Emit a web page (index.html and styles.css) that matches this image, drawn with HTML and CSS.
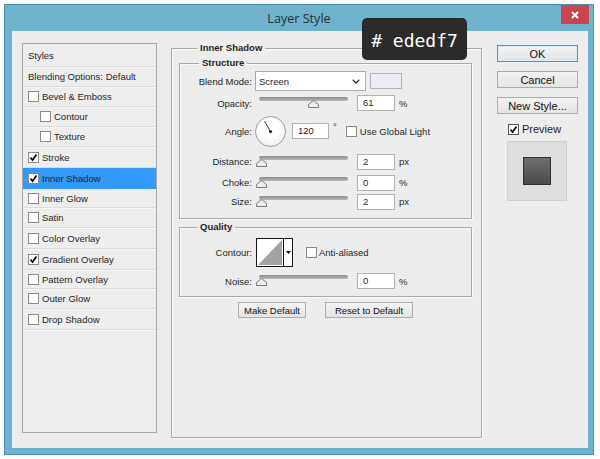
FILE: index.html
```html
<!DOCTYPE html>
<html>
<head>
<meta charset="utf-8">
<link rel="stylesheet" href="styles.css">
</head>
<body>
<div class="window">
  <div class="titlebar">
    <span></span>
    <span class="title">Layer Style</span>
    <div class="close"><svg width="10" height="10" viewBox="0 0 10 10"><path d="M2 2 L8 8 M8 2 L2 8" stroke="#fff" stroke-width="1.8" fill="none"/></svg></div>
  </div>
  <div class="tooltip"># ededf7</div>
  <div class="content">
    <div class="styles-panel">
      <div class="srow head">Styles</div>
      <div class="srow">Blending Options: Default</div>
      <div class="srow"><span class="cb"></span>Bevel &amp; Emboss</div>
      <div class="srow sub"><span class="cb"></span>Contour</div>
      <div class="srow sub"><span class="cb"></span>Texture</div>
      <div class="srow tall"><span class="cb"><svg viewBox="0 0 9 9"><polyline points="1.5,4.5 3.5,7 7.5,1.5"/></svg></span>Stroke</div>
      <div class="srow tall active"><span class="cb"><svg viewBox="0 0 9 9"><polyline points="1.5,4.5 3.5,7 7.5,1.5"/></svg></span>Inner Shadow</div>
      <div class="srow short"><span class="cb"></span>Inner Glow</div>
      <div class="srow"><span class="cb"></span>Satin</div>
      <div class="srow tall"><span class="cb"></span>Color Overlay</div>
      <div class="srow tall"><span class="cb"><svg viewBox="0 0 9 9"><polyline points="1.5,4.5 3.5,7 7.5,1.5"/></svg></span>Gradient Overlay</div>
      <div class="srow short"><span class="cb"></span>Pattern Overlay</div>
      <div class="srow"><span class="cb"></span>Outer Glow</div>
      <div class="srow tall"><span class="cb"></span>Drop Shadow</div>
    </div>

    <div class="group main">
      <div class="gtitle">Inner Shadow</div>
      <div class="group structure">
        <div class="gtitle">Structure</div>
        <div class="frow blend">
          <span class="lbl">Blend Mode:</span>
          <div class="select"><span>Screen</span><svg width="8" height="5" viewBox="0 0 8 5"><polyline points="0.7,0.7 4,4 7.3,0.7"/></svg></div>
          <span class="swatch"></span>
        </div>
        <div class="frow opacity">
          <span class="lbl">Opacity:</span>
          <div class="slider"><span class="track"></span><svg class="thumb" style="--v:61" width="11" height="8" viewBox="0 0 11 8"><polygon points="5.5,0.5 10.5,4.5 10.5,7.5 0.5,7.5 0.5,4.5"/></svg></div>
          <span class="num">61</span><span class="unit">%</span>
        </div>
        <div class="frow angle">
          <span class="lbl">Angle:</span>
          <div class="dial"><svg width="31" height="31" viewBox="0 0 31 31"><line x1="15.5" y1="15.5" x2="9.5" y2="5" stroke="#333" stroke-width="1"/><circle cx="15.5" cy="15.5" r="1.6" fill="#222"/></svg></div>
          <span class="num short">120</span><span class="deg">°</span>
          <span class="cb global"></span><span class="cbtext">Use Global Light</span>
        </div>
        <div class="frow distance">
          <span class="lbl">Distance:</span>
          <div class="slider"><span class="track"></span><svg class="thumb" style="--v:1" width="11" height="8" viewBox="0 0 11 8"><polygon points="5.5,0.5 10.5,4.5 10.5,7.5 0.5,7.5 0.5,4.5"/></svg></div>
          <span class="num">2</span><span class="unit">px</span>
        </div>
        <div class="frow choke">
          <span class="lbl">Choke:</span>
          <div class="slider"><span class="track"></span><svg class="thumb" style="--v:0" width="11" height="8" viewBox="0 0 11 8"><polygon points="5.5,0.5 10.5,4.5 10.5,7.5 0.5,7.5 0.5,4.5"/></svg></div>
          <span class="num">0</span><span class="unit">%</span>
        </div>
        <div class="frow size">
          <span class="lbl">Size:</span>
          <div class="slider"><span class="track"></span><svg class="thumb" style="--v:1" width="11" height="8" viewBox="0 0 11 8"><polygon points="5.5,0.5 10.5,4.5 10.5,7.5 0.5,7.5 0.5,4.5"/></svg></div>
          <span class="num">2</span><span class="unit">px</span>
        </div>
      </div>

      <div class="group quality">
        <div class="gtitle">Quality</div>
        <div class="frow contour-row">
          <span class="lbl">Contour:</span>
          <div class="contour">
            <svg class="curve" width="26" height="27" viewBox="0 0 26 27"><polygon points="1,26 25,1 25,26" fill="#a3a3a3"/></svg>
            <span class="drop"><svg width="5" height="3" viewBox="0 0 5 3"><polygon points="0,0 5,0 2.5,3" fill="#111"/></svg></span>
          </div>
          <span class="cb aa"></span><span class="cbtext">Anti-aliased</span>
        </div>
        <div class="frow noise">
          <span class="lbl">Noise:</span>
          <div class="slider"><span class="track"></span><svg class="thumb" style="--v:0" width="11" height="8" viewBox="0 0 11 8"><polygon points="5.5,0.5 10.5,4.5 10.5,7.5 0.5,7.5 0.5,4.5"/></svg></div>
          <span class="num">0</span><span class="unit">%</span>
        </div>
      </div>

      <div class="btnrow">
        <span class="btn make">Make Default</span>
        <span class="btn reset">Reset to Default</span>
      </div>
    </div>

    <div class="actions">
      <span class="btn big ok">OK</span>
      <span class="btn big">Cancel</span>
      <span class="btn big">New Style...</span>
      <div class="preview-row"><span class="cb dark"><svg viewBox="0 0 9 9"><polyline points="1.5,4.5 3.5,7 7.5,1.5"/></svg></span>Preview</div>
      <div class="preview"><span class="square"></span></div>
    </div>
  </div>
</div>
</body>
</html>
```

FILE: styles.css
```css
* { box-sizing: border-box; }

body {
  margin: 0;
  background: #ffffff;
  font-family: "Liberation Sans", Arial, sans-serif;
  font-size: 9.5px;
  color: #1f1f1f;
}

.window {
  position: relative;
  margin: 4px;
  width: 590px;
  height: 451px;
  border: 1px solid #4f8eab;
  background: #71b3ce;
  display: flex;
  flex-direction: column;
}

.titlebar {
  height: 26px;
  display: grid;
  grid-template-columns: 1fr auto 1fr;
}

.title {
  font-family: "Open Sans", "Liberation Sans", sans-serif;
  font-size: 12.6px;
  line-height: 28px;
  color: #262f35;
}

.close {
  justify-self: end;
  align-self: start;
  width: 28px;
  height: 19px;
  margin-right: 4px;
  background: #c8474c;
  display: flex;
  align-items: center;
  justify-content: center;
}

.tooltip {
  position: absolute;
  left: 357px;
  top: 13px;
  width: 105px;
  height: 42px;
  padding-top: 4px;
  border-radius: 5px;
  background: #2b2b2b;
  color: #ffffff;
  font-family: "DejaVu Sans Mono", monospace;
  font-size: 18px;
  line-height: 38px;
  text-align: center;
  z-index: 2;
}

.content {
  flex: 1;
  margin: 0 5px 6px 7px;
  background: #ededed;
  display: flex;
  align-items: flex-start;
  padding-left: 10px;
}

/* left styles list */
.styles-panel {
  margin-top: 12px;
  width: 135px;
  height: 390px;
  border: 1px solid #a7a7a7;
  background: #eeeeee;
}

.srow {
  height: 20px;
  display: flex;
  align-items: center;
  padding-left: 5px;
  border-bottom: 1px solid #dcdcdc;
  box-shadow: 0 1px 0 #f8f8f8;
  white-space: nowrap;
}

.srow.head { height: 23px; }
.srow.tall { height: 21px; }
.srow.short { height: 19px; }
.srow.sub { padding-left: 17px; }
.srow.active { background: #3399fb; border-bottom-color: #3399fb; box-shadow: none; }

.cb {
  flex: none;
  width: 11px;
  height: 11px;
  border: 1px solid #8a8a8a;
  background: #ffffff;
  margin-right: 3px;
  display: inline-flex;
}

.cb svg { width: 9px; height: 9px; }
.cb polyline { fill: none; stroke: #000; stroke-width: 1.7; }

/* group boxes */
.group {
  border: 1px solid #aaaaaa;
  box-shadow: inset 1px 1px 0 #fbfbfb, 1px 1px 0 #fbfbfb;
}

.gtitle {
  width: fit-content;
  margin: -7px 0 0 18px;
  padding: 0 3px;
  background: #ededed;
  font-weight: bold;
  line-height: 12px;
}

.group.main {
  margin-top: 17px;
  margin-left: 14px;
  width: 311px;
  height: 390px;
  padding: 0 9px 0 7px;
}

.group.structure {
  margin-top: 9px;
  padding-bottom: 8px;
}

.group.structure .gtitle { margin-left: 19px; }
.group.quality .gtitle { margin-left: 17px; }

.group.quality {
  margin-top: 8px;
  padding-bottom: 7px;
}

.frow {
  display: flex;
  align-items: center;
  white-space: nowrap;
}

.lbl {
  flex: none;
  width: 72px;
  margin-right: 3px;
  text-align: right;
}

.frow.blend { margin-top: 2px; height: 20px; }
.frow.opacity { margin-top: 3px; height: 18px; }
.frow.angle { margin-top: 3px; height: 32px; }
.frow.distance { margin-top: 6px; height: 17px; }
.frow.choke { margin-top: 4px; height: 17px; }
.frow.size { margin-top: 2px; height: 17px; }

.select {
  width: 111px;
  height: 20px;
  border: 1px solid #acacac;
  background: #ffffff;
  display: flex;
  align-items: center;
  justify-content: space-between;
  padding: 0 5px 0 3px;
}

.select polyline { fill: none; stroke: #333; stroke-width: 1.3; }

.swatch {
  width: 32px;
  height: 16px;
  margin-left: 4px;
  border: 1px solid #b3b3b3;
  background: #ededf7;
}

.slider {
  flex: none;
  width: 97px;
  height: 14px;
  margin-right: 5px;
  display: flex;
  flex-direction: column;
}

.track {
  height: 4px;
  margin: 1px 4px 0;
  border-radius: 2px;
  background: linear-gradient(#8c8c8c, #b8b8b8);
}

.thumb {
  margin-top: -1px;
  margin-left: calc(0.5px + var(--v) * 0.86px);
}

.thumb polygon { fill: #ececec; stroke: #7b7b7b; stroke-width: 1; }

.num {
  flex: none;
  width: 38px;
  height: 16px;
  border: 1px solid #b1b1b1;
  background: #ffffff;
  padding-left: 5px;
  line-height: 14px;
}

.num.short { width: 37px; margin-left: 6px; }

.unit { margin-left: 4px; }

.dial {
  flex: none;
  width: 31px;
  height: 31px;
  border: 1px solid #9c9c9c;
  border-radius: 50%;
  background: radial-gradient(circle at 50% 40%, #ffffff 40%, #e6e6e6 100%);
  display: flex;
  align-items: center;
  justify-content: center;
}

.dial svg { flex: none; }

.deg { margin-left: 4px; align-self: flex-start; margin-top: 6px; }

.cb.global { margin-left: 9px; margin-right: 3px; }
.cb.aa { margin-left: 13px; margin-right: 2px; }

.contour-row { margin-top: 5px; height: 29px; }

.contour {
  flex: none;
  margin-left: 1px;
  width: 37px;
  height: 29px;
  border: 1px solid #151515;
  background: #ffffff;
  display: flex;
}

.contour .curve { flex: none; }

.drop {
  flex: 1;
  border-left: 1px solid #151515;
  display: flex;
  align-items: center;
  justify-content: center;
  background: #fafafa;
}

.frow.noise { margin-top: 6px; height: 16px; }

.btnrow {
  margin-top: 5px;
  display: flex;
  justify-content: center;
  gap: 19px;
}

.btn {
  height: 16px;
  border: 1px solid #acacac;
  background: linear-gradient(#f4f4f4, #e3e3e3);
  display: flex;
  align-items: center;
  justify-content: center;
  white-space: nowrap;
  color: #111;
}

.btn.make { width: 68px; }
.btn.reset { width: 88px; }

.actions {
  margin-top: 14px;
  margin-left: 15px;
  width: 81px;
  display: flex;
  flex-direction: column;
}

.btn.big {
  height: 17px;
  font-size: 11px;
  margin-bottom: 9px;
}

.btn.ok {
  border-color: #3f96dc;
  box-shadow: inset 0 0 0 1px #d6eaf9;
}

.preview-row {
  display: flex;
  align-items: center;
  height: 12px;
  padding-left: 11px;
  font-size: 11px;
}

.cb.dark { border-color: #555; margin-right: 3px; }

.preview {
  margin-top: 6px;
  margin-left: 10px;
  width: 60px;
  height: 60px;
  border: 1px solid #cfcfcf;
  background: #dedede;
  display: flex;
  align-items: center;
  justify-content: center;
}

.square {
  width: 28px;
  height: 28px;
  border: 1px solid #2f2f2f;
  background: linear-gradient(#6e6e6e, #4a4a4a);
}
```
